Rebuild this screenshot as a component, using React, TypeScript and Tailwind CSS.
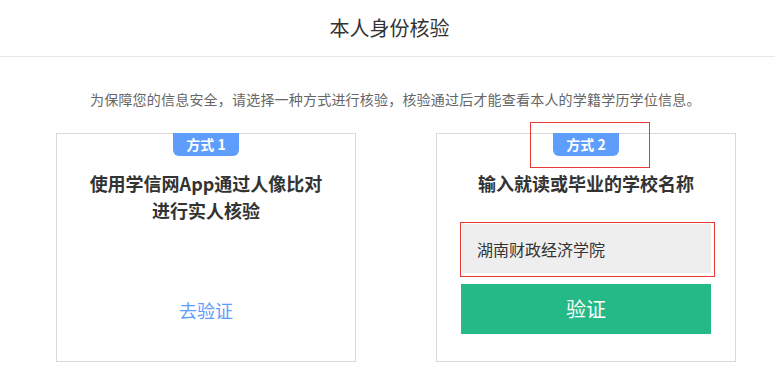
const font = "font-['Microsoft_YaHei','Noto_Sans_CJK_SC',sans-serif]";

function Badge({ label }: { label: string }) {
  return (
    <div className="mx-auto -mt-px flex h-[23px] w-[66px] items-center justify-center rounded-b-[6px] bg-[#5f9dfc] text-[14px] font-bold text-white">
      {label}
    </div>
  );
}

export default function App() {
  return (
    <div className={`${font} h-[386px] w-[775px] overflow-hidden bg-white text-[#333]`}>
      {/* Header */}
      <div className="flex h-[57px] items-center justify-center border-b border-[#e8e8e8] pl-[4px] text-[20px] text-[#333]">
        本人身份核验
      </div>

      {/* Hint */}
      <div className="mt-[32px] pl-[90px] text-[14px] leading-[20px] tracking-[0.2px] text-[#666]">
        为保障您的信息安全，请选择一种方式进行核验，核验通过后才能查看本人的学籍学历学位信息。
      </div>

      {/* Cards */}
      <div className="mt-[24px] flex gap-[80px] pl-[56px]">
        {/* Method 1 */}
        <div className="flex h-[229px] w-[300px] flex-col border border-[#d9d9d9]">
          <Badge label="方式 1" />
          <div className="mt-[14px] text-center text-[18px] font-bold leading-[27px] text-[#333]">
            使用学信网App通过人像比对
            <br />
            进行实人核验
          </div>
          <div className="mt-[73px] text-center text-[18px] text-[#5f9dfc]">去验证</div>
        </div>

        {/* Method 2 */}
        <div className="relative flex h-[229px] w-[300px] flex-col border border-[#d9d9d9]">
          <div className="pointer-events-none absolute left-[93px] top-[-12px] h-[46px] w-[120px] border border-[#e53935]" />
          <Badge label="方式 2" />
          <div className="mt-[14px] text-center text-[18px] font-bold leading-[27px] text-[#333]">
            输入就读或毕业的学校名称
          </div>
          <div className="ml-[23px] mt-[25px] w-[255px] border border-[#e53935] p-px pr-[3px] pb-[3px]">
            <div className="flex h-[49px] items-center bg-[#eeeeee] pl-[15px] text-[16px] text-[#333]">
              湖南财政经济学院
            </div>
          </div>
          <button className="ml-[24px] mt-[7px] flex h-[50px] w-[250px] items-center justify-center bg-[#24b987] text-[20px] text-white">
            验证
          </button>
        </div>
      </div>
    </div>
  );
}
